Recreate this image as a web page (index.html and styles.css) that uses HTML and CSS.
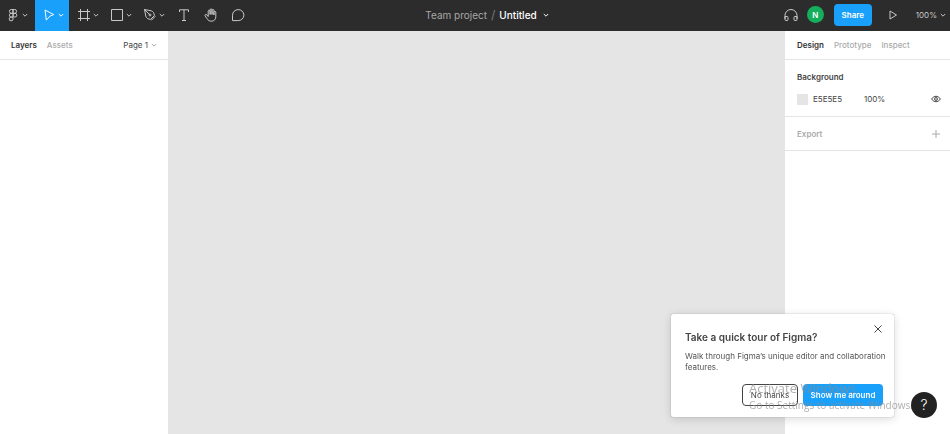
FILE: index.html
```html
<!DOCTYPE html>
<html lang="en">
<head>
    <meta charset="UTF-8">
    <meta name="viewport" content="width=device-width, initial-scale=1.0">
    <title>Untitled – Figma</title>
    <link rel="stylesheet" href="styles.css">
</head>
<body>
    <svg class="sprite" aria-hidden="true">
        <symbol id="chevron" viewBox="0 0 6 6"><path d="M0.8 2l2.2 2.2L5.2 2"/></symbol>
    </svg>

    <header class="toolbar">
        <div class="tools">
            <button class="tool menu" aria-label="Main menu">
                <svg class="icon" viewBox="0 0 16 16"><path d="M8 2.5H6.3a1.9 1.9 0 0 0 0 3.8H8zM8 2.5h1.7a1.9 1.9 0 0 1 0 3.8H8zM8 6.3H6.3a1.9 1.9 0 0 0 0 3.8H8zM8 10.1H6.3A1.9 1.9 0 1 0 8 12z"/><circle cx="9.9" cy="8.2" r="1.9"/></svg>
                <svg class="chevron"><use href="#chevron"/></svg>
            </button>
            <button class="tool active" aria-label="Move">
                <svg class="icon" viewBox="0 0 16 16"><path d="M4 3l8.700 4.600L9 9.100l-3.700 4z"/></svg>
                <svg class="chevron"><use href="#chevron"/></svg>
            </button>
            <button class="tool" aria-label="Frame">
                <svg class="icon" viewBox="0 0 16 16"><path d="M4.5 2v12M11.5 2v12M2 4.5h12M2 11.5h12"/></svg>
                <svg class="chevron"><use href="#chevron"/></svg>
            </button>
            <button class="tool" aria-label="Rectangle">
                <svg class="icon" viewBox="0 0 16 16"><path d="M2.5 2.5h11v11h-11z"/></svg>
                <svg class="chevron"><use href="#chevron"/></svg>
            </button>
            <button class="tool" aria-label="Pen">
                <svg class="icon" viewBox="0 0 16 16"><path d="M2.500 2.500l6.700 1.300c2 .6 3.200 2.600 3.100 4.900l-3.600 3.600C6.400 12.400 4.400 11.200 3.800 9.200zM2.500 2.500l4.800 4.800M9.300 13.300l4-4"/><circle cx="8" cy="8" r="1"/></svg>
                <svg class="chevron"><use href="#chevron"/></svg>
            </button>
            <button class="tool single" aria-label="Text">
                <svg class="icon" viewBox="0 0 16 16"><path d="M3.5 5V2.8h9V5M8 2.8v10.7M6 13.5h4"/></svg>
            </button>
            <button class="tool single" aria-label="Hand">
                <svg class="icon" viewBox="0 0 16 16"><path d="M5.2 9.5V4.2c0-1.4 1.900-1.400 1.900 0V7.500 2.900c0-1.400 1.900-1.400 1.900 0V7.500 3.400c0-1.400 1.900-1.400 1.900 0V8 5.200c0-1.300 1.900-1.300 1.900 0v4.600c0 2.700-1.800 4.400-4.400 4.400-2.200 0-3.300-.9-4.300-2.500L2.100 8.900c-.6-1.100.8-2 1.700-1.100z"/></svg>
            </button>
            <button class="tool single" aria-label="Comment">
                <svg class="icon" viewBox="0 0 16 16"><path d="M2.5 13.6V8.2a5.700 5.500 0 1 1 5.700 5.400z"/></svg>
            </button>
        </div>

        <div class="file">
            <a class="project" href="#">Team project</a>
            <span class="slash">/</span>
            <button class="file-name">Untitled <svg class="chevron"><use href="#chevron"/></svg></button>
        </div>

        <div class="actions">
            <button class="audio" aria-label="Audio">
                <svg class="icon" viewBox="0 0 16 16"><path d="M2 12V8.500a6 6 0 0 1 12 0V12M2 9.500h2q1 0 1 1v2q0 1-1 1H3q-1 0-1-1zM14 9.500h-2q-1 0-1 1v2q0 1 1 1h1q1 0 1-1z"/></svg>
            </button>
            <button class="avatar">N</button>
            <button class="share">Share</button>
            <button class="play" aria-label="Present">
                <svg class="icon" viewBox="0 0 16 16"><path d="M5 4l6.500 4L5 12z"/></svg>
            </button>
            <button class="zoom">100% <svg class="chevron"><use href="#chevron"/></svg></button>
        </div>
    </header>

    <main class="workspace">
        <aside class="panel">
            <div class="tabs">
                <button class="tab current">Layers</button>
                <button class="tab">Assets</button>
                <button class="page">Page 1 <svg class="chevron"><use href="#chevron"/></svg></button>
            </div>
        </aside>

        <section class="canvas" aria-label="Canvas"></section>

        <aside class="panel properties">
            <div class="tabs">
                <button class="tab current">Design</button>
                <button class="tab">Prototype</button>
                <button class="tab">Inspect</button>
            </div>
            <section class="background">
                <h2>Background</h2>
                <div class="fill">
                    <span class="swatch"></span>
                    <input class="hex" type="text" value="E5E5E5" aria-label="Background colour">
                    <input class="opacity" type="text" value="100%" aria-label="Opacity">
                    <button class="small-button" aria-label="Toggle visibility">
                        <svg class="eye" viewBox="0 0 12 12"><path d="M1.500 6q4.500-5.600 9 0-4.500 5.600-9 0z"/><circle cx="6" cy="6" r="1.400"/></svg>
                    </button>
                </div>
            </section>
            <section class="export">
                <h2>Export</h2>
                <button class="small-button" aria-label="Add export">
                    <svg class="plus" viewBox="0 0 12 12"><path d="M6 2v8M2 6h8"/></svg>
                </button>
            </section>
        </aside>
    </main>

    <div class="tour" role="dialog" aria-labelledby="tour-title">
        <button class="close" aria-label="Close">
            <svg viewBox="0 0 10 10"><path d="M1.500 1.500l7 7M8.500 1.500l-7 7"/></svg>
        </button>
        <h1 id="tour-title">Take a quick tour of Figma?</h1>
        <p>Walk through Figma’s unique editor and collaboration features.</p>
        <div class="tour-buttons">
            <button class="secondary">No thanks</button>
            <button class="primary">Show me around</button>
        </div>
    </div>

    <div class="activation">
        <div class="activation-title">Activate Windows</div>
        <div>Go to Settings to activate Windows.</div>
    </div>

    <button class="help" aria-label="Help">?</button>
</body>
</html>
```
FILE: styles.css
```css
* {
    box-sizing: border-box;
}
body {
    margin: 0;
    height: 100vh;
    display: flex;
    flex-direction: column;
    overflow: hidden;
    font-family: Inter, sans-serif;
    font-size: 8px;
    line-height: 12px;
    color: #444;
    background: #fff;
}
button, input {
    font: inherit;
    color: inherit;
    background: none;
    border: none;
    padding: 0;
    margin: 0;
}
button {
    cursor: pointer;
}
h1, h2, p {
    margin: 0;
}
svg {
    fill: none;
    stroke: currentColor;
    flex: none;
}
.sprite {
    display: none;
}
.icon {
    width: 16px;
    height: 16px;
}
.chevron {
    width: 6px;
    height: 6px;
}

/* top bar */
.toolbar {
    display: grid;
    grid-template-columns: 1fr auto 1fr;
    height: 31px;
    flex: none;
    background: #2c2c2c;
    color: #c8c8c8;
}
.tools, .file, .actions {
    display: flex;
    align-items: center;
}
.tool {
    width: 33px;
    height: 31px;
    padding-bottom: 1px;
    display: flex;
    align-items: center;
    justify-content: center;
    gap: 1px;
}
.tool.menu {
    width: 35px;
    padding-right: 3px;
}
.tool.single {
    width: 27px;
}
.tool.active {
    width: 34px;
    margin-right: 2px;
    background: #18a0fb;
    color: #fff;
}
.file {
    padding: 0 0 2px 24px;
    gap: 4px;
    font-size: 10px;
}
.project {
    color: #a8a8a8;
    text-decoration: none;
}
.slash {
    color: #777;
    font-size: 12px;
}
.file-name {
    display: flex;
    align-items: center;
    gap: 6px;
    color: #fff;
    font-weight: 500;
}
.actions {
    justify-content: flex-end;
    padding: 0 4px 2px 0;
}
.audio, .play {
    display: flex;
}
.avatar {
    width: 17px;
    height: 17px;
    margin: 0 10px 0 8px;
    border-radius: 50%;
    background: #14ae5c;
    color: #fff;
    font-weight: 600;
}
.share {
    width: 38px;
    height: 22px;
    border-radius: 4px;
    background: #18a0fb;
    color: #fff;
    font-weight: 600;
}
.play {
    margin: 0 15px 0 13px;
}
.zoom {
    display: flex;
    align-items: center;
    gap: 3px;
}

/* panels */
.workspace {
    flex: 1;
    display: grid;
    grid-template-columns: 168px 1fr 165px;
}
.canvas {
    background: #e5e5e5;
}
.tabs {
    display: flex;
    align-items: center;
    gap: 10px;
    height: 29px;
    padding: 0 11px;
    border-bottom: 1px solid #e5e5e5;
}
.properties .tabs {
    padding-left: 12px;
}
.tab {
    color: #aaa;
    font-weight: 500;
}
.tab.current {
    color: #333;
    font-weight: 600;
}
.page {
    display: flex;
    align-items: center;
    gap: 3px;
    margin-left: auto;
}
.page .chevron {
    color: #aaa;
}
h2 {
    font-size: 8px;
    font-weight: 600;
}
.background {
    padding: 11px 8px 11px 12px;
    border-bottom: 1px solid #e5e5e5;
}
.fill {
    display: flex;
    align-items: center;
    margin-top: 10px;
}
.swatch {
    width: 11px;
    height: 11px;
    margin-right: 5px;
    background: #e5e5e5;
}
.hex {
    width: 51px;
}
.opacity {
    width: 32px;
}
.small-button {
    display: flex;
    margin-left: auto;
}
.small-button svg {
    width: 12px;
    height: 12px;
}
.export {
    display: flex;
    align-items: center;
    height: 34px;
    padding: 0 8px 0 12px;
    border-bottom: 1px solid #e5e5e5;
    color: #aaa;
}

/* onboarding dialog */
.tour {
    position: fixed;
    right: 56px;
    bottom: 17px;
    width: 223px;
    padding: 16px 4px 11px 14px;
    background: #fff;
    border-radius: 2px;
    box-shadow: 0 0 1px rgba(0, 0, 0, 0.5), 0 2px 10px rgba(0, 0, 0, 0.15);
}
.tour h1 {
    font-size: 10px;
    line-height: 14px;
    font-weight: 600;
}
.tour p {
    margin-top: 7px;
    line-height: 11px;
    color: #555;
}
.close {
    position: absolute;
    top: 10px;
    right: 11px;
    display: flex;
}
.close svg {
    width: 10px;
    height: 10px;
}
.tour-buttons {
    display: flex;
    justify-content: flex-end;
    gap: 5px;
    margin-top: 11px;
    padding-right: 7px;
}
.secondary, .primary {
    height: 22px;
    border-radius: 4px;
}
.secondary {
    width: 56px;
    border: 1px solid #444;
}
.primary {
    width: 80px;
    background: #18a0fb;
    color: #fff;
    font-weight: 600;
}

/* system notice over the page */
.activation {
    position: fixed;
    right: 37px;
    bottom: 22px;
    width: 164px;
    font-family: "Open Sans", sans-serif;
    font-size: 10px;
    line-height: 14px;
    white-space: nowrap;
    color: rgba(140, 140, 140, 0.7);
    pointer-events: none;
}
.activation-title {
    font-size: 13px;
    line-height: 20px;
}
.help {
    position: fixed;
    right: 13px;
    bottom: 16px;
    width: 26px;
    height: 26px;
    border-radius: 50%;
    background: #222;
    color: #fff;
    font-size: 14px;
    font-weight: 300;
}
```
